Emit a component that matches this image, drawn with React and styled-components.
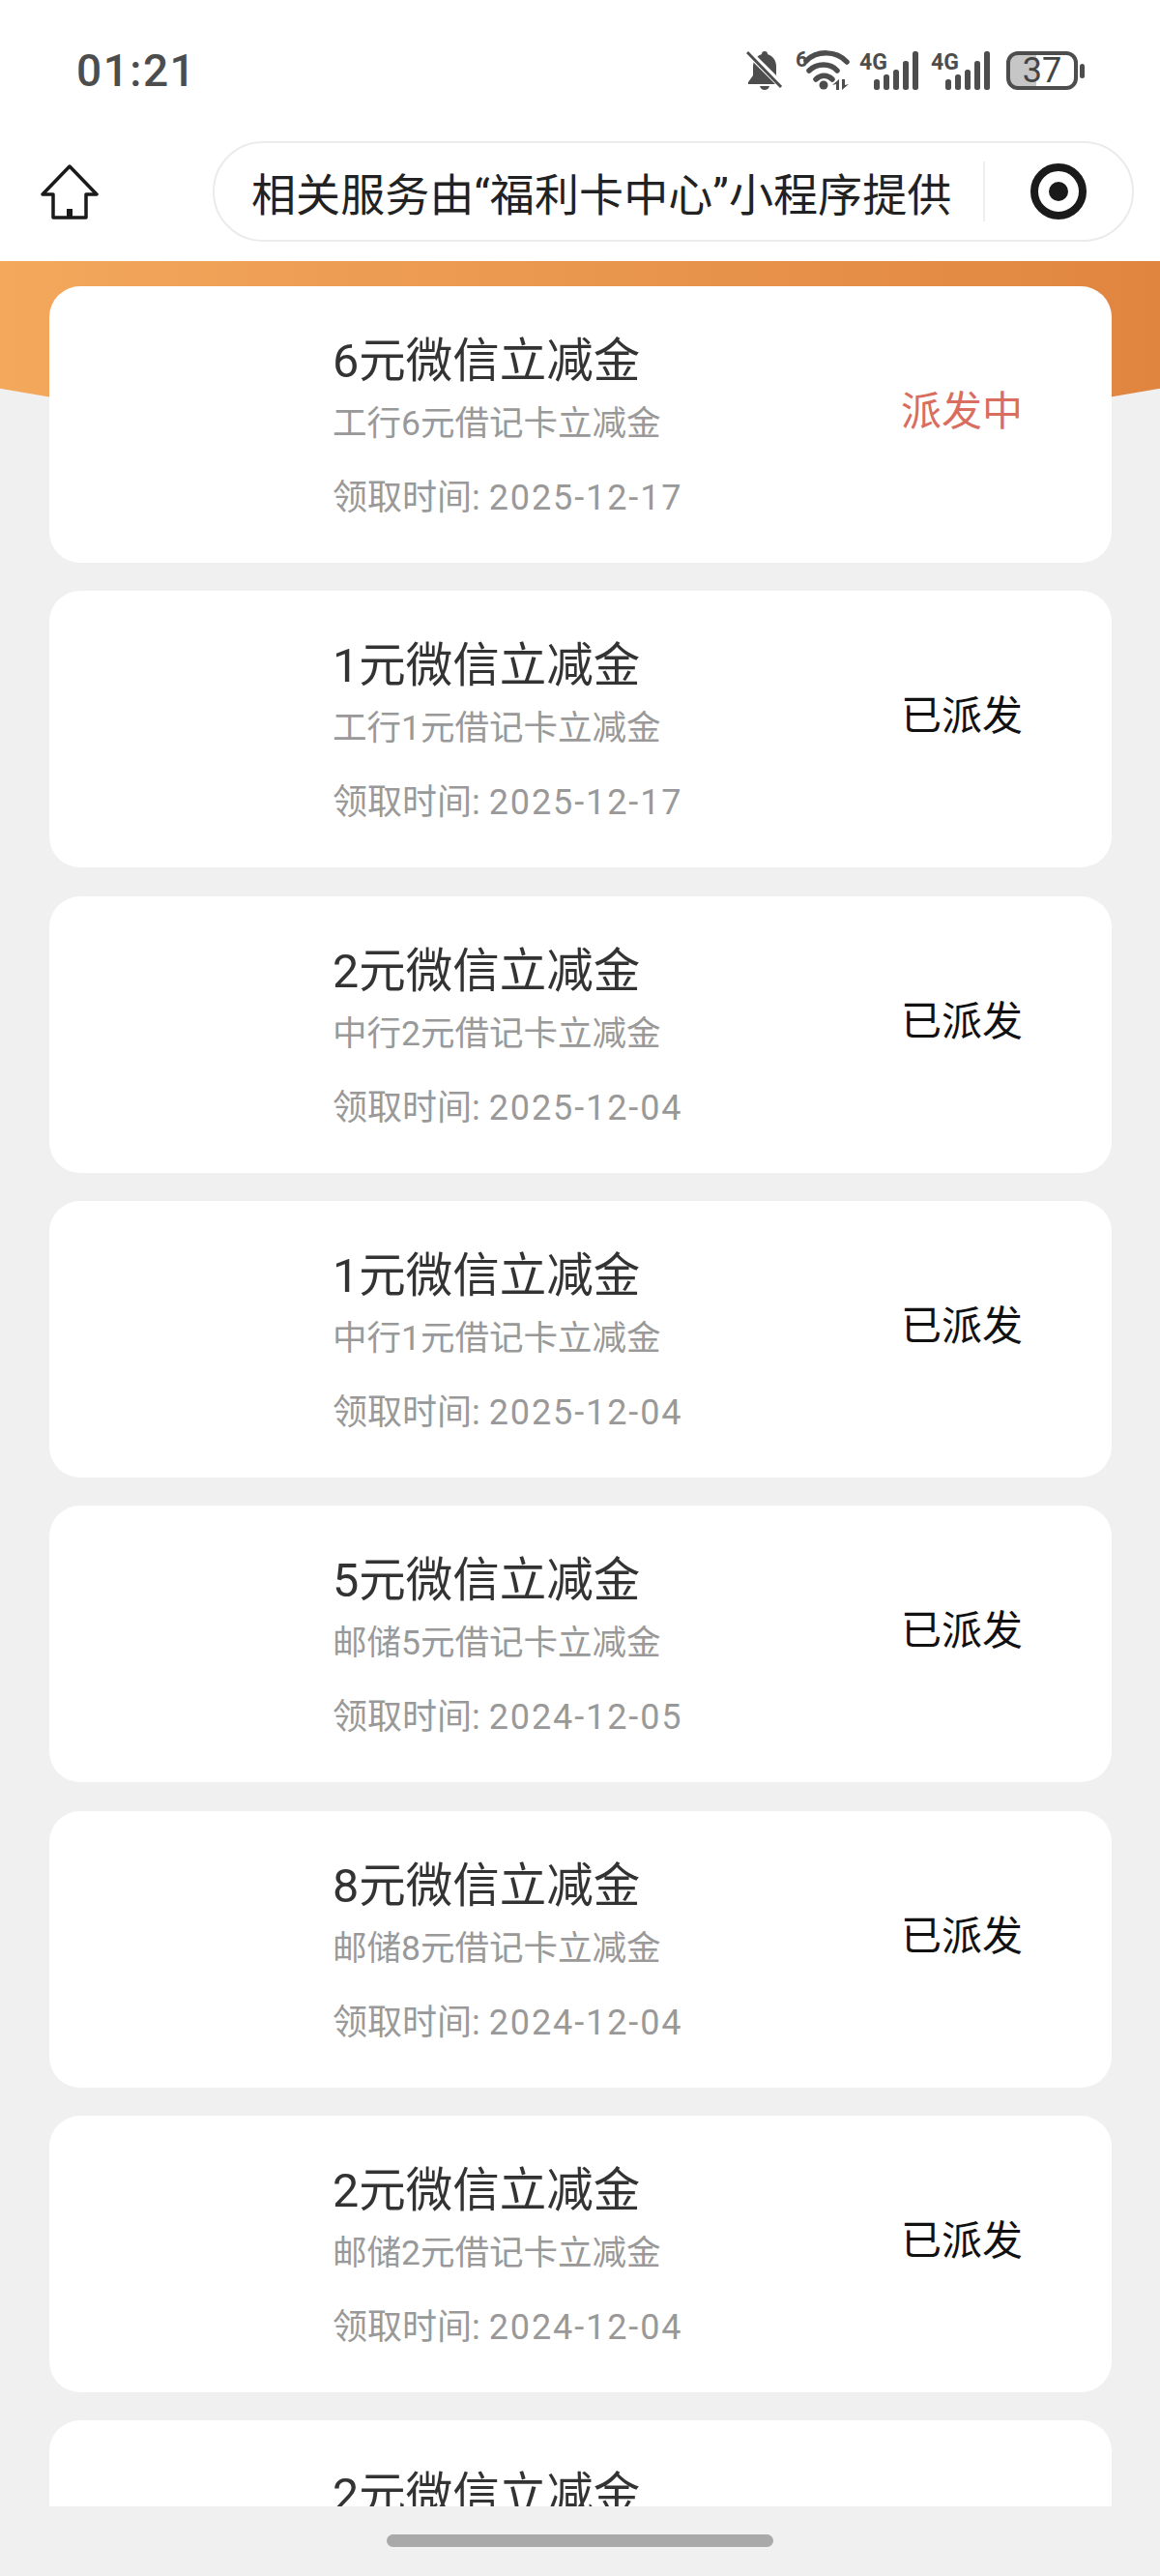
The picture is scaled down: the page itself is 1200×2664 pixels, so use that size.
import React from 'react'
import styled, { createGlobalStyle } from 'styled-components'

const GlobalStyle = createGlobalStyle`
  html, body {
    margin: 0;
    padding: 0;
    background: #f0f0f0;
  }
  * {
    box-sizing: border-box;
  }
`

const FONT = `Roboto, "Noto Sans CJK SC", sans-serif`

const Page = styled.div`
  width: 1200px;
  height: 2664px;
  display: flex;
  flex-direction: column;
  overflow: hidden;
  background: #f0f0f0;
  font-family: ${FONT};
`

const StatusBar = styled.div`
  height: 120px;
  flex: none;
  background: #fff;
  display: flex;
  align-items: center;
  justify-content: space-between;
  padding: 26px 78px 0 79px;
  color: #4d4d4d;
`

const Clock = styled.span`
  font-size: 46px;
  font-weight: 500;
  letter-spacing: 1.5px;
  line-height: 1;
`

const StatusIcons = styled.div`
  display: flex;
  align-items: center;
  gap: 13px;
`

const NavBar = styled.div`
  height: 150px;
  flex: none;
  background: #fff;
  display: flex;
  align-items: flex-start;
  padding: 26px 27px 0 42px;
`

const HomeButton = styled.div`
  width: 178px;
  flex: none;
  padding-top: 24px;
  display: flex;
`

const Capsule = styled.div`
  flex: 1;
  height: 104px;
  border: 2px solid #ebebeb;
  border-radius: 52px;
  background: #fff;
  display: flex;
  align-items: center;
  padding-left: 38px;
`

const CapsuleText = styled.span`
  width: 757px;
  flex: none;
  font-size: 46px;
  letter-spacing: 0.1px;
  color: #222;
  white-space: nowrap;
`

const CapsuleDivider = styled.div`
  width: 2px;
  height: 62px;
  flex: none;
  background: #eeeeee;
`

const CapsuleIcon = styled.div`
  flex: 1;
  display: flex;
  justify-content: center;
`

const Main = styled.div`
  position: relative;
  flex: 1;
  min-height: 0;
  overflow: hidden;
`

const Banner = styled.div`
  position: absolute;
  top: 0;
  left: 0;
  right: 0;
  height: 190px;
  background: linear-gradient(90deg, #f3a85c, #e08540);
  clip-path: ellipse(3400px 3400px at 600px -3215px);
`

const List = styled.div`
  position: relative;
  display: flex;
  flex-direction: column;
  gap: 29.33px;
  padding: 26px 50px 0 51px;
`

const Card = styled.div`
  height: 286px;
  flex: none;
  background: #fff;
  border-radius: 32px;
  display: flex;
  justify-content: space-between;
  padding: 0 92px 0 293px;
`

const Info = styled.div`
  display: flex;
  flex-direction: column;
  padding-top: 44px;
`

const Title = styled.div`
  font-size: 48.5px;
  line-height: 68px;
  color: #333;
`

const Subtitle = styled.div`
  font-size: 35.5px;
  line-height: 50px;
  margin-top: 5px;
  color: #999;
`

const DateLine = styled.div`
  font-size: 36px;
  line-height: 50px;
  margin-top: 27px;
  color: #999;
`

const DateValue = styled.span`
  letter-spacing: 1.9px;
`

const Status = styled.div`
  align-self: center;
  margin-top: -26px;
  font-size: 42px;
  line-height: 56px;
  color: ${props => (props.$active ? '#d96d5f' : '#111')};
`

const BottomBar = styled.div`
  height: 72px;
  flex: none;
  background: #f0f0f0;
  display: flex;
  justify-content: center;
  padding-top: 29px;
`

const HomePill = styled.div`
  width: 400px;
  height: 13px;
  border-radius: 7px;
  background: #a9a9a9;
`

const BellIcon = () => (
  <svg width="38" height="44" viewBox="0 0 38 44">
    <path d="M19 2c2 0 3 1 3 3 6 2 9 7 9 13v9l5 7v2H2v-2l5-7v-9c0-6 3-11 9-13 0-2 1-3 3-3z" fill="#4d4d4d" />
    <path d="M14 38h10c-1 3-3 4-5 4s-4-1-5-4z" fill="#4d4d4d" />
    <path d="M1 2l36 36" stroke="#fff" strokeWidth="7" />
    <path d="M1 3l35 36" stroke="#4d4d4d" strokeWidth="3" />
  </svg>
)

const WifiSvg = styled.svg`
  overflow: visible;
`

const WifiIcon = () => (
  <WifiSvg width="53" height="54" viewBox="0 -4 53 54" fill="none">
    <text x="0" y="19" fontFamily="Roboto, sans-serif" fontSize="22" fontWeight="700" fill="#4d4d4d">6</text>
    <path d="M11 13C22 2 42 2 53 14" stroke="#4d4d4d" strokeWidth="5.500" strokeLinecap="round" />
    <path d="M14 23C22 15 36 15 43 23" stroke="#4d4d4d" strokeWidth="5.500" strokeLinecap="round" />
    <path d="M21 32C26 27 33 27 38 32" stroke="#4d4d4d" strokeWidth="5.500" strokeLinecap="round" />
    <circle cx="29" cy="38" r="4.5" fill="#4d4d4d" />
    <path d="M45 32v11h-3v-6l-4 1zM48 32h3v6l4-1-7 6z" fill="#4d4d4d" />
  </WifiSvg>
)

const SignalIcon = () => (
  <svg width="61" height="50" viewBox="0 -5 61 50">
    <text x="0" y="19" fontFamily="Roboto, sans-serif" fontSize="23" fontWeight="700" fill="#4d4d4d">4G</text>
    <rect x="15" y="29" width="6" height="11" rx="2.500" fill="#4d4d4d" />
    <rect x="25" y="24" width="6" height="16" rx="2.500" fill="#4d4d4d" />
    <rect x="35" y="19" width="6" height="21" rx="2.500" fill="#4d4d4d" />
    <rect x="45" y="10" width="6" height="30" rx="2.500" fill="#4d4d4d" />
    <rect x="55" y="0" width="6" height="40" rx="2.500" fill="#4d4d4d" />
  </svg>
)

const Battery = styled.div`
  width: 74px;
  height: 40px;
  border: 4px solid #4d4d4d;
  border-radius: 12px;
  overflow: hidden;
  display: flex;
  align-items: center;
  justify-content: center;
  font-size: 36px;
  line-height: 1;
  color: #444;
  background: linear-gradient(90deg, #c6c6c6 27px, #fff 27px);
`

const BatteryWrap = styled.div`
  display: flex;
  align-items: center;
  gap: 2px;
  margin-left: 4px;
`

const BatteryNub = styled.div`
  width: 5px;
  height: 15px;
  border-radius: 3px;
  background: #4d4d4d;
`

const HomeIcon = () => (
  <svg width="60" height="58" viewBox="0 0 60 58" fill="none">
    <path
      d="M30 2L58 31H47V55H13V31H2Z"
      stroke="#1a1a1a"
      strokeWidth="3.500"
      strokeLinejoin="round"
    />
    <rect x="27" y="46" width="6" height="9" fill="#1a1a1a" />
  </svg>
)

const TargetIcon = () => (
  <svg width="58" height="58" viewBox="0 0 58 58" fill="none">
    <circle cx="29" cy="29" r="25" stroke="#1a1a1a" strokeWidth="8" />
    <circle cx="29" cy="29" r="10" fill="#1a1a1a" />
  </svg>
)

const records = [
  { title: '6元微信立减金', sub: '工行6元借记卡立减金', date: '2025-12-17', status: '派发中', active: true },
  { title: '1元微信立减金', sub: '工行1元借记卡立减金', date: '2025-12-17', status: '已派发' },
  { title: '2元微信立减金', sub: '中行2元借记卡立减金', date: '2025-12-04', status: '已派发' },
  { title: '1元微信立减金', sub: '中行1元借记卡立减金', date: '2025-12-04', status: '已派发' },
  { title: '5元微信立减金', sub: '邮储5元借记卡立减金', date: '2024-12-05', status: '已派发' },
  { title: '8元微信立减金', sub: '邮储8元借记卡立减金', date: '2024-12-04', status: '已派发' },
  { title: '2元微信立减金', sub: '邮储2元借记卡立减金', date: '2024-12-04', status: '已派发' },
  // only the title of this one is in view above the home bar
  { title: '2元微信立减金' }
]

function App () {
  return (
    <Page>
      <GlobalStyle />
      <StatusBar>
        <Clock>01:21</Clock>
        <StatusIcons>
          <BellIcon />
          <WifiIcon />
          <SignalIcon />
          <SignalIcon />
          <BatteryWrap>
            <Battery>37</Battery>
            <BatteryNub />
          </BatteryWrap>
        </StatusIcons>
      </StatusBar>
      <NavBar>
        <HomeButton><HomeIcon /></HomeButton>
        <Capsule>
          <CapsuleText>相关服务由“福利卡中心”小程序提供</CapsuleText>
          <CapsuleDivider />
          <CapsuleIcon><TargetIcon /></CapsuleIcon>
        </Capsule>
      </NavBar>
      <Main>
        <Banner />
        <List>
          {records.map((r, i) => (
            <Card key={i}>
              <Info>
                <Title>{r.title}</Title>
                {r.sub && <Subtitle>{r.sub}</Subtitle>}
                {r.date && <DateLine>领取时间: <DateValue>{r.date}</DateValue></DateLine>}
              </Info>
              {r.status && <Status $active={r.active}>{r.status}</Status>}
            </Card>
          ))}
        </List>
      </Main>
      <BottomBar>
        <HomePill />
      </BottomBar>
    </Page>
  )
}

export default App
